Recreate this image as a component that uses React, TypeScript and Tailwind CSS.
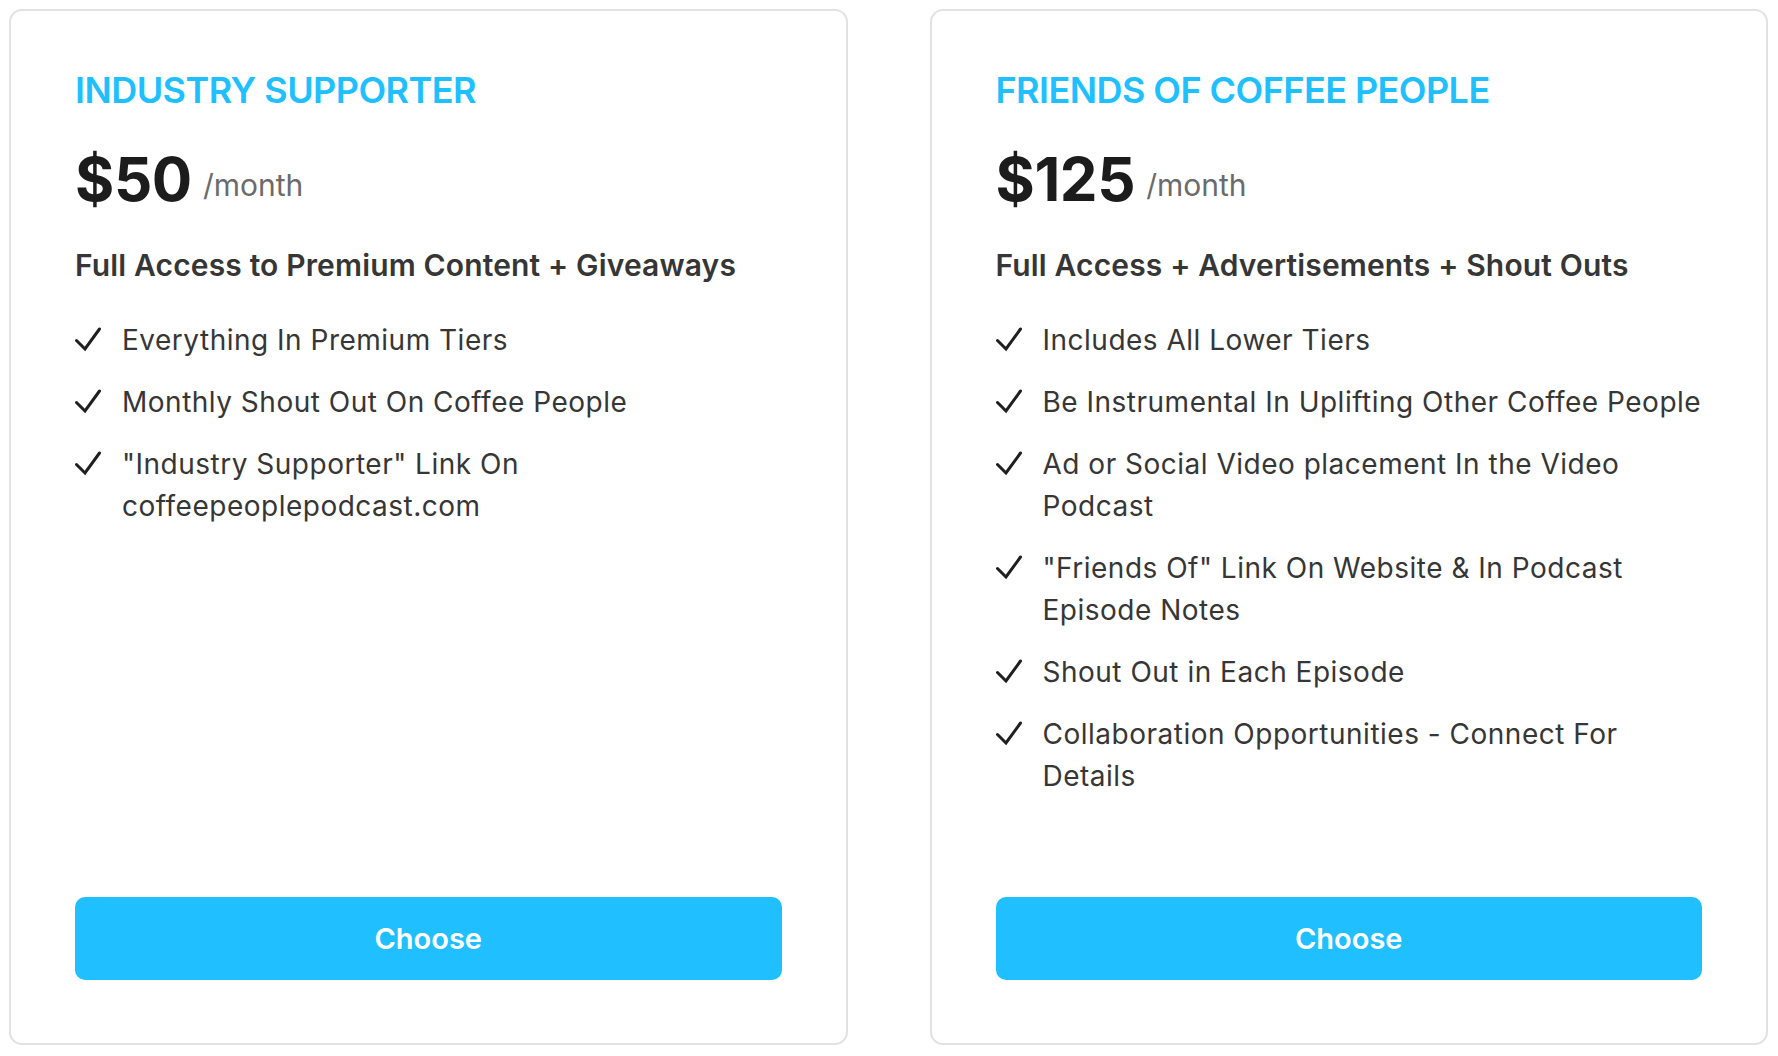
import React from "react";

const Check = () => (
  <svg width="26" height="42" viewBox="0 0 26 42" fill="none" className="shrink-0">
    <path d="M1.5 21.5 L10 30 L24.5 10" stroke="#1f1f1f" strokeWidth="3" strokeLinecap="round" strokeLinejoin="miter" />
  </svg>
);

type Plan = {
  title: string;
  price: string;
  subtitle: string;
  items: string[];
};

const plans: Plan[] = [
  {
    title: "INDUSTRY SUPPORTER",
    price: "$50",
    subtitle: "Full Access to Premium Content + Giveaways",
    items: [
      "Everything In Premium Tiers",
      "Monthly Shout Out On Coffee People",
      "\"Industry Supporter\" Link On coffeepeoplepodcast.com",
    ],
  },
  {
    title: "FRIENDS OF COFFEE PEOPLE",
    price: "$125",
    subtitle: "Full Access + Advertisements + Shout Outs",
    items: [
      "Includes All Lower Tiers",
      "Be Instrumental In Uplifting Other Coffee People",
      "Ad or Social Video placement In the Video Podcast",
      "\"Friends Of\" Link On Website & In Podcast Episode Notes",
      "Shout Out in Each Episode",
      "Collaboration Opportunities - Connect For Details",
    ],
  },
];

function Card({ plan }: { plan: Plan }) {
  return (
    <div className="flex flex-col rounded-[13px] border-2 border-[#e2e2e2] bg-white px-[64px] pt-[57px] pb-[63px]">
      <h2 className="text-[36px] leading-[44px] font-semibold text-[#20bfff] tracking-[-0.55px]">{plan.title}</h2>
      <div className="mt-[37px] flex items-end gap-[11px]">
        <span className="text-[60px] leading-[60px] font-bold text-[#1c1c1c] tracking-[-0.4px]">{plan.price}</span>
        <span className="mb-[6px] text-[30px] leading-[36px] text-[#6b6b6b]">/month</span>
      </div>
      <p className="mt-[38px] text-[30px] leading-[36px] font-semibold text-[#363636] tracking-[0.15px]">{plan.subtitle}</p>
      <ul className="mt-[36px] -mr-[4px] flex flex-col gap-[20px]">
        {plan.items.map((it, i) => (
          <li key={i} className="flex items-start gap-[21px]">
            <Check />
            <span className="text-[28px] leading-[42px] text-[#363636] tracking-[0.5px]">{it}</span>
          </li>
        ))}
      </ul>
      <button className="mt-auto h-[83px] w-full rounded-[10px] bg-[#20bfff] text-[29px] font-semibold text-white">
        Choose
      </button>
    </div>
  );
}

export default function App() {
  return (
    <div
      className="h-[1056px] w-[1778px] bg-white pl-[9px] pr-[10px] pt-[9px] pb-[11px]"
      style={{ fontFamily: "Inter, 'Noto Sans', sans-serif" }}
    >
      <div className="grid h-full grid-cols-2 gap-[82px]">
        {plans.map((p) => (
          <Card key={p.title} plan={p} />
        ))}
      </div>
    </div>
  );
}
